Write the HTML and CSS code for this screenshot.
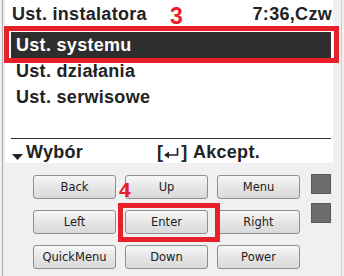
FILE: index.html
```html
<!DOCTYPE html>
<html lang="pl">
<head>
    <meta charset="UTF-8">
    <meta name="viewport" content="width=device-width, initial-scale=1.0">
    <title>Ust. instalatora</title>
    <link rel="stylesheet" href="styles.css">
</head>
<body>
    <div class="device">
        <!-- Wyswietlacz -->
        <div class="lcd">
            <div class="lcd-header">
                <span>Ust. instalatora</span>
                <span>7:36,Czw</span>
            </div>
            <ul class="menu">
                <li class="menu-item selected">Ust. systemu</li>
                <li class="menu-item">Ust. działania</li>
                <li class="menu-item">Ust. serwisowe</li>
            </ul>
            <div class="lcd-footer">
                <span class="footer-left">
                    <svg class="down-arrow" width="11" height="7" viewBox="0 0 11 7"><polygon points="0,0 11,0 5.5,6" fill="#222"/></svg>Wybór
                </span>
                <span class="footer-right">[<svg class="enter-icon" width="16" height="13" viewBox="0 0 16 13"><path d="M13.5 2 V9 H3" fill="none" stroke="#222" stroke-width="1.7"/><polygon points="0,9 5,5.5 5,12.5" fill="#222"/></svg>]&nbsp;Akcept.</span>
            </div>
        </div>

        <!-- Przyciski -->
        <div class="controls">
            <div class="buttons">
                <button class="btn">Back</button>
                <button class="btn">Up</button>
                <button class="btn">Menu</button>
                <button class="btn">Left</button>
                <button class="btn">Enter</button>
                <button class="btn">Right</button>
                <button class="btn">QuickMenu</button>
                <button class="btn">Down</button>
                <button class="btn">Power</button>
            </div>
            <div class="leds">
                <div class="led"></div>
                <div class="led"></div>
            </div>
        </div>

        <!-- Oznaczenia -->
        <div class="mark mark-box box-menu"></div>
        <div class="mark mark-num num-3">3</div>
        <div class="mark mark-box box-enter"></div>
        <div class="mark mark-num num-4">4</div>
    </div>
</body>
</html>
```

FILE: styles.css
```css
body {
    margin: 0;
    padding: 0 0 0 2px;
    background: #f0f0f0;
    font-family: 'Liberation Sans', Arial, sans-serif;
    color: #222;
    width: 344px;
    height: 276px;
    overflow: hidden;
    box-sizing: border-box;
}
.device {
    position: relative;
    height: 276px;
    border-left: 1px solid #a8a8a8;
    border-right: 1px solid #d0d0d0;
    padding-left: 2px;
    width: 340px;
    box-sizing: border-box;
}
.lcd {
    width: 328px;
    height: 163px;
    background: #fff;
    box-sizing: border-box;
    font-weight: bold;
    font-size: 18px;
    letter-spacing: 0.3px;
}
.lcd-header {
    display: flex;
    justify-content: space-between;
    height: 26px;
    padding: 3px 1px 0 7px;
    line-height: 23px;
    box-sizing: border-box;
}
.menu {
    list-style: none;
    margin: 6px 2px 0 6px;
    padding: 0;
    height: 106px;
}
.menu-item {
    height: 26px;
    line-height: 26px;
    padding-left: 5px;
}
.menu-item.selected {
    background: #2e2e2e;
    color: #fff;
}
.lcd-footer {
    display: flex;
    margin: 0 2px 0 6px;
    border-top: 1px solid #333;
    height: 25px;
    line-height: 24px;
}
.footer-left {
    display: flex;
    align-items: center;
    width: 146px;
}
.down-arrow {
    margin: 12px 3px 0 1px;
}
.footer-right {
    display: flex;
    align-items: center;
}
.enter-icon {
    margin: 1px 1px 0 1px;
}
.controls {
    display: flex;
    padding: 12px 0 0 28px;
}
.buttons {
    display: grid;
    grid-template-columns: repeat(3, 83px);
    grid-auto-rows: 24px;
    column-gap: 9px;
    row-gap: 11px;
}
.btn {
    font-family: 'DejaVu Sans', Verdana, sans-serif;
    font-size: 11.5px;
    color: #222;
    border: 1px solid #8e8e8e;
    border-radius: 3px;
    background: linear-gradient(#f7f7f7, #e6e6e6 50%, #d9d9d9);
    padding: 0;
}
.leds {
    display: flex;
    flex-direction: column;
    gap: 9px;
    margin-left: 11px;
    margin-top: -1px;
}
.led {
    width: 20px;
    height: 20px;
    background: #6c6c6c;
    border: 1px solid #595959;
    box-sizing: border-box;
}
.mark {
    position: absolute;
}
.mark-box {
    border: 5px solid #e8202a;
    box-sizing: border-box;
}
.box-menu {
    left: 1px;
    top: 26px;
    width: 335px;
    height: 37px;
}
.box-enter {
    left: 115px;
    top: 203px;
    width: 102px;
    height: 39px;
}
.mark-num {
    color: #e8202a;
    font-weight: bold;
}
.num-3 {
    left: 167px;
    top: 5px;
    font-size: 23px;
    line-height: 23px;
}
.num-4 {
    left: 116px;
    top: 179px;
    font-size: 21px;
    line-height: 21px;
}
```
